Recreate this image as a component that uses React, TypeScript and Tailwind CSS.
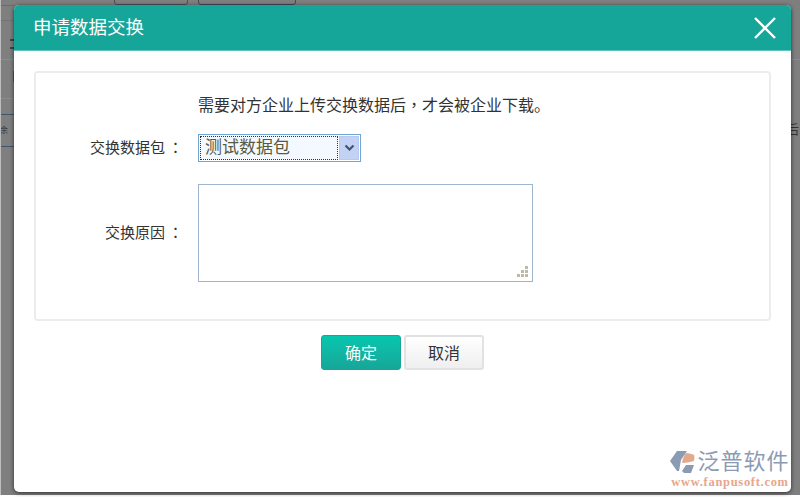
const cjk = "font-['Liberation_Sans','Noto_Sans_CJK_SC',sans-serif]";
const tc = "font-['Noto_Sans_CJK_TC',sans-serif] leading-none";

function Backdrop() {
  return (
    <div className="absolute inset-0 bg-[#7f7f7f]">
      <div className="absolute left-[114px] top-[-6px] h-[11px] w-[74px] rounded-[3px] border border-[#4b4f55]" />
      <div className="absolute left-[198px] top-[-6px] h-[11px] w-[98px] rounded-[3px] border border-[#3f4a5c]" />
      <div className="absolute left-0 top-[5px] h-px w-[14px] bg-[#6c6c6c]" />
      <div className="absolute left-0 top-[20px] h-px w-[14px] bg-[#747474]" />
      <div className="absolute left-[10px] top-[39px] h-[2px] w-[4px] bg-[#444]" />
      <div className="absolute left-[10px] top-[47px] h-[2px] w-[4px] bg-[#444]" />
      <div className="absolute left-0 top-[59px] h-px w-[14px] bg-[#8a8a8a]" />
      <div className="absolute left-[13px] top-[71px] h-[11px] w-px bg-[#555]" />
      <div className="absolute left-0 top-[98px] h-px w-[14px] bg-[#8a8a8a]" />
      <div className="absolute left-0 top-[114px] h-px w-[14px] bg-[#3f5468]" />
      <div className="absolute left-0 top-[146px] h-px w-[14px] bg-[#3f5468]" />
      <div className="absolute right-0 top-[59px] h-px w-[9px] bg-[#8a8a8a]" />
      <div className="absolute left-0 top-[127px] text-[8px] leading-none text-[#333]">
        <span className={cjk}>余</span>
      </div>
      <div className="absolute left-[786px] top-[123px] text-[13px] leading-none text-[#333]">
        <span className={cjk}>后</span>
      </div>
      <div className="absolute inset-y-0 left-0 w-px bg-[#bdbdbd]" />
      <div className="absolute inset-x-0 bottom-0 h-[2px] bg-white" />
    </div>
  );
}

function Logo() {
  return (
    <div className="absolute bottom-[4px] right-0 flex w-[122px] flex-col items-center">
      <div className="flex items-center whitespace-nowrap">
        <svg width="26" height="24" viewBox="0 0 26 24" className="shrink-0">
          <path d="M0 11 7 1H17L11 10 9 21H7Z" fill="#8b9bb4" />
          <path d="M12 13C13 8 14 5 16 3C19 3 22 4 24 5C25 8 24 10 24 11C20 12 16 13 12 13Z" fill="#e3a98c" />
          <path d="M12 21 16 15H24L21 23H14Z" fill="#8b9bb4" />
        </svg>
        <span className={`${cjk} ml-[1px] text-[22px] leading-none tracking-[1px] text-[#8b9bb4]`}>泛普软件</span>
      </div>
      <span className="font-['Liberation_Serif',serif] mt-[2px] whitespace-nowrap text-[12.5px] font-bold leading-none tracking-[0.7px] text-[#e8a68a]">
        www.fanpusoft.com
      </span>
    </div>
  );
}

function Label({ text }: { text: string }) {
  return (
    <span className="w-[147px] text-right text-[15px] leading-[20px] text-[#333]">
      {text}
      <span className={`${tc} ml-[3px]`}>：</span>
    </span>
  );
}

export default function App() {
  return (
    <div className={`${cjk} relative h-[497px] w-[800px] overflow-hidden`}>
      <Backdrop />
      <div className="relative ml-[14px] mt-[5px] flex h-[487px] w-[777px] flex-col overflow-hidden rounded-[5px] bg-white shadow-[0_1px_4px_rgba(0,0,0,0.65)]">
        <div className="flex h-[46px] shrink-0 items-center justify-between border-b border-[#5cc4b8] bg-[#16a699] pl-[19px] pr-[14px]">
          <span className="text-[18.5px] text-white">申请数据交换</span>
          <svg width="24" height="24" viewBox="0 0 24 24">
            <path d="M2 2 22 22M22 2 2 22" fill="none" stroke="#fff" strokeWidth="2.4" />
          </svg>
        </div>
        <div className="flex flex-col px-[20px] pt-[20px]">
          <div className="h-[250px] rounded-[4px] border-2 border-[#ececec] pt-[23px]">
            <p className="ml-[162px] h-[20px] whitespace-nowrap text-[16px] leading-[20px] text-[#333]">
              需要对方企业上传交换数据后<span className={tc}>，</span>才会被企业下载。
            </p>
            <div className="mt-[18px] flex items-center">
              <Label text="交换数据包" />
              <div className="ml-[15px] flex h-[28px] w-[163px] items-stretch border border-[#6fa9d3] p-px">
                <div className="flex-1 border border-dotted border-[#333] bg-[#f3f9ff] pl-[4px] text-[17px] leading-[22px] text-[#5a5a40]">
                  测试数据包
                </div>
                <div className="ml-px flex w-[20px] items-center justify-center border border-[#b9c8f0] bg-[#c3d1f5]">
                  <svg width="11" height="8" viewBox="0 0 11 8">
                    <path d="M1.5 1.5 5.5 5.5 9.5 1.5" fill="none" stroke="#44546e" strokeWidth="2.2" />
                  </svg>
                </div>
              </div>
            </div>
            <div className="mt-[22px] flex items-center">
              <Label text="交换原因" />
              <div className="relative ml-[15px] h-[98px] w-[335px] border border-[#9db5cf] bg-white">
                <svg className="absolute bottom-[3px] right-[3px]" width="13" height="13" viewBox="0 0 13 13" fill="#bdb8a8">
                  <rect x="9" y="1" width="3" height="3" />
                  <rect x="5" y="5" width="3" height="3" />
                  <rect x="9" y="5" width="3" height="3" />
                  <rect x="1" y="9" width="3" height="3" />
                  <rect x="5" y="9" width="3" height="3" />
                  <rect x="9" y="9" width="3" height="3" />
                </svg>
              </div>
            </div>
          </div>
          <div className="mt-[14px] flex justify-center gap-[3px]">
            <button className="h-[35px] w-[80px] rounded-[3px] border border-[#16a699] bg-gradient-to-b from-[#05c7ae] to-[#16a699] pt-[3px] text-[16px] text-white">确定</button>
            <button className="h-[35px] w-[80px] rounded-[3px] border-2 border-[#e2e2e2] bg-gradient-to-b from-white to-[#efefef] pt-[3px] text-[16px] text-[#333]">取消</button>
          </div>
        </div>
        <Logo />
      </div>
    </div>
  );
}
